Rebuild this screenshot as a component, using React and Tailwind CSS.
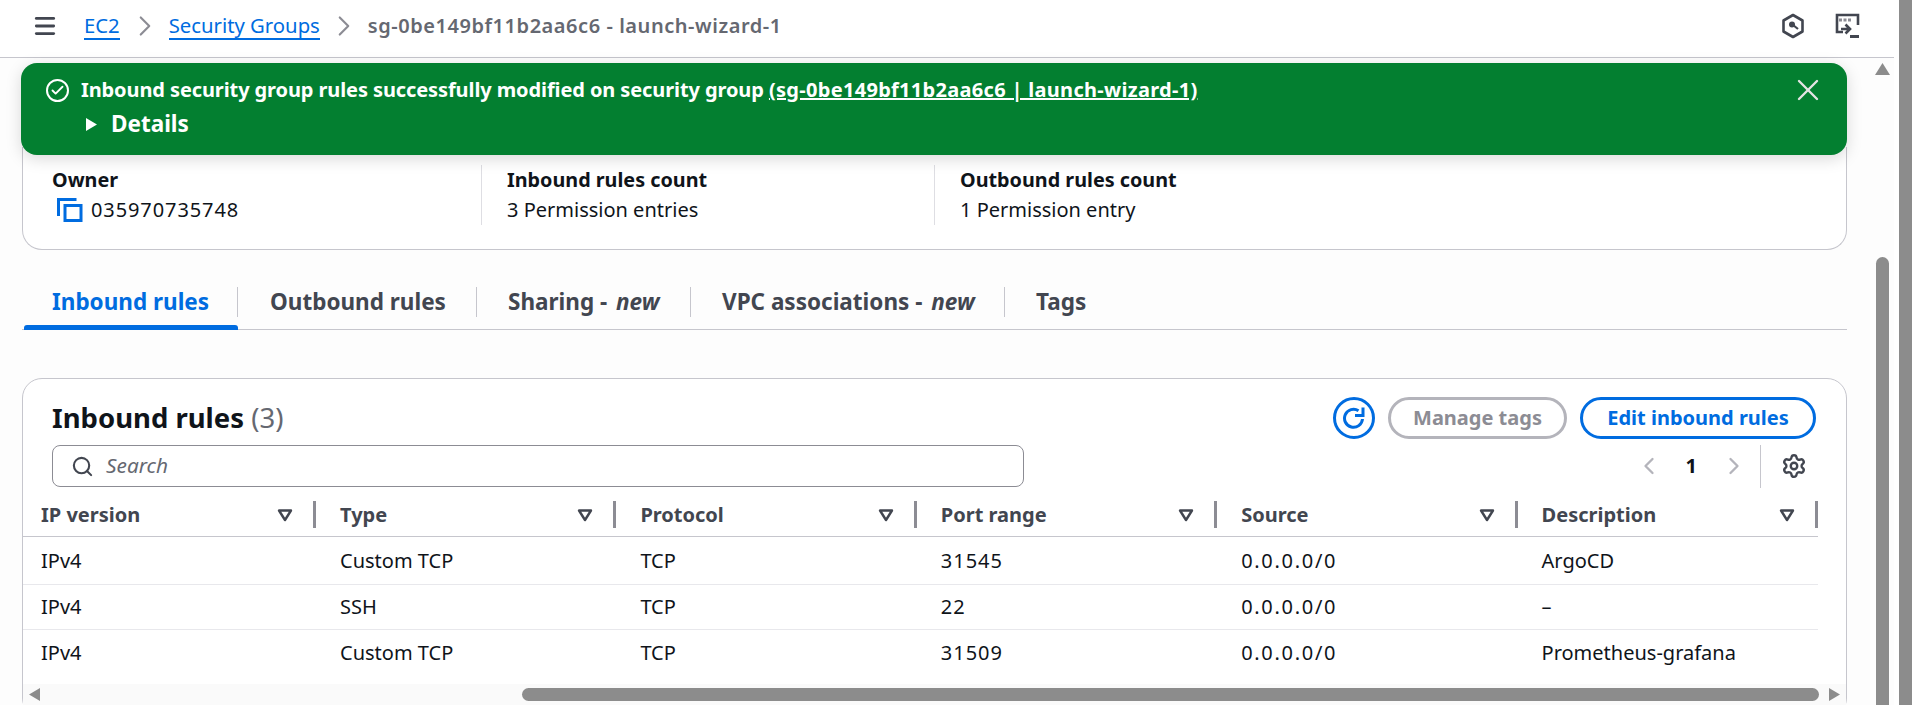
import React from "react";
import { Check, ChevronLeft, ChevronRight, Menu, Search, Settings, X } from "lucide-react";

const columns = ["IP version", "Type", "Protocol", "Port range", "Source", "Description"];

const rules = [
  ["IPv4", "Custom TCP", "TCP", "31545", "0.0.0.0/0", "ArgoCD"],
  ["IPv4", "SSH", "TCP", "22", "0.0.0.0/0", "–"],
  ["IPv4", "Custom TCP", "TCP", "31509", "0.0.0.0/0", "Prometheus-grafana"],
];

// the digits in the original font run wider than Noto Sans
const cellTracking = ["", "", "", "tracking-[1px]", "tracking-[1.7px]", ""];

const tabs = [
  { label: "Inbound rules", active: true, width: "w-[214px]", pad: "pl-[28px]" },
  { label: "Outbound rules", width: "w-[239px]", pad: "pl-[32px]" },
  { label: "Sharing - ", extra: "new", width: "w-[214px]", pad: "pl-[31px]" },
  { label: "VPC associations - ", extra: "new", width: "w-[314px]", pad: "pl-[31px]" },
  { label: "Tags", width: "w-[120px]", pad: "pl-[31px]", last: true },
];

function SortIcon() {
  return (
    <svg width="16" height="14" viewBox="0 0 16 14" className="shrink-0">
      <path d="M2 2.5h12L8 12z" fill="none" stroke="#424650" strokeWidth="2.4" strokeLinejoin="round" />
    </svg>
  );
}

function HexIcon() {
  return (
    <svg width="24" height="26" viewBox="0 0 24 26">
      <path d="M12 2l9.5 5.5v11L12 24l-9.5-5.5v-11z" fill="none" stroke="#424650" strokeWidth="2.6" strokeLinejoin="round" />
      <circle cx="11" cy="11.5" r="3" fill="#424650" />
      <path d="M12 12l5 4" stroke="#424650" strokeWidth="2.2" />
    </svg>
  );
}

function ShellIcon() {
  return (
    <svg width="26" height="26" viewBox="0 0 26 26">
      <path d="M3 16V2h21v10" fill="none" stroke="#424650" strokeWidth="2.6" />
      <path d="M3 16v3h6" fill="none" stroke="#424650" strokeWidth="2.6" />
      <path d="M5 5.5h3v3H5zM9.5 5.5h3v3h-3zM14 5.5h3v3h-3z" fill="#8c8c94" />
      <path d="M7 16h8M11.5 11.5l4.5 4.5-4.5 4.5" fill="none" stroke="#424650" strokeWidth="2.6" />
      <path d="M16 23.5h9" stroke="#424650" strokeWidth="3" />
    </svg>
  );
}

function CopyIcon() {
  return (
    <svg width="26" height="24" viewBox="0 0 26 24">
      <path d="M1.5 18V1.5h18" fill="none" stroke="#006ce0" strokeWidth="3" />
      <rect x="8" y="7.5" width="16" height="15" fill="none" stroke="#006ce0" strokeWidth="3" />
    </svg>
  );
}

function RefreshIcon() {
  return (
    <svg width="24" height="24" viewBox="0 0 24 24">
      <path d="M20.5 13a9 9 0 1 1-4-8.2" fill="none" stroke="#006ce0" strokeWidth="3" />
      <path d="M21 1.5v8h-8" fill="none" stroke="#006ce0" strokeWidth="3" />
    </svg>
  );
}

export default function App() {
  return (
    <div className="flex h-[705px] overflow-hidden bg-white font-['Noto_Sans',sans-serif] text-[20px] text-[#0f141a]">
      <div className="flex w-[1894px] flex-col">
        {/* Top bar */}
        <header className="flex h-[58px] shrink-0 items-center border-b border-[#c6c6cd] bg-white pb-[5px] pl-[34px] pr-[34px]">
          <Menu size={26} strokeWidth={2.6} className="ml-[-2px] text-[#424650]" />
          <a className="ml-[26px] border-b-2 border-[#006ce0] text-[20.3px] leading-[25px] text-[#006ce0]">EC2</a>
          <ChevronRight size={34} strokeWidth={1.5} className="ml-[8px] mr-[7px] text-[#8c8c94]" />
          <a className="border-b-2 border-[#006ce0] text-[20.3px] leading-[25px] text-[#006ce0]">Security Groups</a>
          <ChevronRight size={34} strokeWidth={1.5} className="mx-[7px] text-[#8c8c94]" />
          <span className="font-semibold tracking-[0.55px] text-[#656871]">sg-0be149bf11b2aa6c6 - launch-wizard-1</span>
          <div className="ml-auto flex items-center gap-[29px]">
            <HexIcon />
            <ShellIcon />
          </div>
        </header>

        <div className="flex min-h-0 flex-1 bg-[#fdfdfd]">
          <main className="ml-[21px] w-[1826px] shrink-0 pt-[5px]">
            {/* Flash */}
            <div className="relative z-10 flex h-[92px] rounded-[16px] bg-[#037f30] pl-[25px] pr-[21px] pt-[14px] font-bold text-white shadow-[0_4px_16px_rgba(0,0,0,0.15)]">
              <div className="flex h-[26px] w-[35px] shrink-0 items-center">
                <span className="flex h-[23px] w-[23px] items-center justify-center rounded-full border-2 border-white">
                  <Check size={15} strokeWidth={3} />
                </span>
              </div>
              <div>
                <div className="leading-[26px]">
                  <span className="tracking-[-0.1px]">Inbound security group rules successfully modified on security group</span>{" "}
                  <a className="tracking-[0.3px] underline">(sg-0be149bf11b2aa6c6 | launch-wizard-1)</a>
                </div>
                <div className="mt-[8px] flex items-center text-[22.5px] leading-[26px]">
                  <svg width="13" height="15" viewBox="0 0 13 15" className="ml-[4px] mr-[13px]">
                    <path d="M1 1l11 6.5L1 14z" fill="white" />
                  </svg>
                  Details
                </div>
              </div>
              <X size={36} strokeWidth={1.6} className="ml-auto mt-[-5px] flex-none text-[#e4e4e4]" />
            </div>

            {/* Details card */}
            <section className="ml-[1px] mt-[-8px] flex h-[103px] rounded-b-[20px] border border-t-0 border-[#c6c6cd] bg-white pt-[18px]">
              <div className="h-[60px] w-[459px] border-r border-[#dedee3] pl-[29px] pt-[2px]">
                <div className="text-[19.8px] font-bold leading-[25px]">Owner</div>
                <div className="mt-[5px] flex items-center leading-[25px]">
                  <span className="ml-[5px] mr-[8px] flex"><CopyIcon /></span>
                  <span className="tracking-[0.9px]">035970735748</span>
                </div>
              </div>
              <div className="h-[60px] w-[453px] border-r border-[#dedee3] pl-[25px] pt-[2px]">
                <div className="text-[19.8px] font-bold leading-[25px]">Inbound rules count</div>
                <div className="mt-[5px] leading-[25px]">3 Permission entries</div>
              </div>
              <div className="pl-[25px] pt-[2px]">
                <div className="text-[19.8px] font-bold leading-[25px]">Outbound rules count</div>
                <div className="mt-[5px] leading-[25px]">1 Permission entry</div>
              </div>
            </section>

            {/* Tabs */}
            <nav className="ml-[1px] mt-[31px] flex h-[49px] border-b border-[#c6c6cd] pl-[2px]">
              {tabs.map((tab) => (
                <div key={tab.label} className={`relative h-[48px] ${tab.width}`}>
                  <div
                    className={`mt-[6px] flex h-[30px] items-center text-[22.5px] font-bold ${tab.pad} ${
                      tab.active ? "text-[#006ce0]" : "text-[#424650]"
                    } ${tab.last ? "" : "border-r border-[#c6c6cd]"}`}
                  >
                    <span className="whitespace-pre">{tab.label}</span>
                    {tab.extra && <i className="ml-[3px]">{tab.extra}</i>}
                  </div>
                  {tab.active && (
                    <div className="absolute inset-x-0 bottom-[-1px] h-[5px] rounded-t-[3px] bg-[#006ce0]" />
                  )}
                </div>
              ))}
            </nav>

            {/* Rules table */}
            <section className="ml-[1px] mt-[48px] h-[340px] rounded-[20px] border border-[#c6c6cd] bg-white pt-[18px]">
              <div className="flex h-[42px] items-center pl-[29px] pr-[30px]">
                <h2 className="text-[27.5px] font-bold">
                  Inbound rules <span className="font-normal text-[#656871]">(3)</span>
                </h2>
                <div className="ml-auto flex items-center">
                  <button className="flex h-[42px] w-[42px] items-center justify-center rounded-full border-[3px] border-[#006ce0]">
                    <RefreshIcon />
                  </button>
                  <button className="ml-[13px] h-[42px] w-[179px] rounded-full border-[3px] border-[#b4b4bb] font-bold text-[#8c8c94]">
                    Manage tags
                  </button>
                  <button className="ml-[13px] h-[42px] w-[236px] rounded-full border-[3px] border-[#006ce0] font-bold text-[#006ce0]">
                    Edit inbound rules
                  </button>
                </div>
              </div>

              <div className="mt-[6px] flex h-[42px] pl-[29px] pr-[39px]">
                <div className="flex h-[42px] w-[972px] items-center rounded-[8px] border-[1.5px] border-[#8c8c94] bg-white pl-[18px]">
                  <Search size={23} strokeWidth={2.2} className="text-[#424650]" />
                  <span className="ml-[12px] text-[20.8px] italic text-[#656871]">Search</span>
                </div>
                <div className="ml-auto flex items-center">
                  <ChevronLeft size={28} strokeWidth={2} className="text-[#b4b4bb]" />
                  <span className="ml-[23px] font-bold">1</span>
                  <ChevronRight size={28} strokeWidth={2} className="ml-[23px] text-[#b4b4bb]" />
                  <div className="ml-[12px] h-[43px] border-l border-[#c6c6cd]" />
                  <Settings size={26} strokeWidth={2.2} className="ml-[20px] text-[#424650]" />
                </div>
              </div>

              <div className="grid w-[1795px] grid-cols-[293px_repeat(5,300.4px)] border-b border-[#c6c6cd]">
                {columns.map((col, i) => (
                  <div
                    key={col}
                    className={`flex h-[49px] items-center justify-between pt-[6px] font-bold text-[#424650] ${
                      i === 0 ? "pl-[18px]" : "pl-[24px]"
                    }`}
                  >
                    {col}
                    <span className="flex items-center gap-[20px]">
                      <SortIcon />
                      <span className="h-[27px] w-[3px] bg-[#8c8c94]" />
                    </span>
                  </div>
                ))}
              </div>

              {rules.map((row, r) => (
                <div
                  key={r}
                  className={`grid w-[1795px] grid-cols-[293px_repeat(5,300.4px)] items-center ${
                    r === 0 ? "h-[48px]" : "h-[45px]"
                  } ${r < 2 ? "border-b border-[#e8e8ec]" : ""}`}
                >
                  {row.map((cell, c) => (
                    <div key={c} className={`${c === 0 ? "pl-[18px]" : "pl-[24px]"} ${cellTracking[c]}`}>
                      {cell}
                    </div>
                  ))}
                </div>
              ))}

              {/* Horizontal scrollbar */}
              <div className="mt-[9px] flex h-[21px] items-start bg-[#fafafa] pl-[6px] pt-[4px]">
                <svg width="11" height="13" viewBox="0 0 11 13"><path d="M11 0v13L0 6.5z" fill="#8c8c8c" /></svg>
                <div className="ml-[482px] h-[13px] w-[1297px] rounded-full bg-[#8c8c8c]" />
                <svg width="11" height="13" viewBox="0 0 11 13" className="ml-[10px]"><path d="M0 0v13l11-6.5z" fill="#8c8c8c" /></svg>
              </div>
            </section>
          </main>

          {/* Page scrollbar */}
          <div className="ml-[28px] w-[15px] pt-[5px]">
            <svg width="15" height="12" viewBox="0 0 15 12"><path d="M7.5 0L15 12H0z" fill="#8c8c8c" /></svg>
            <div className="ml-px mt-[182px] h-[460px] w-[13px] rounded-t-full bg-[#8c8c8c]" />
          </div>
        </div>
      </div>
      <div className="ml-[5px] h-full w-[13px] bg-[#8c8c8c]" />
    </div>
  );
}
